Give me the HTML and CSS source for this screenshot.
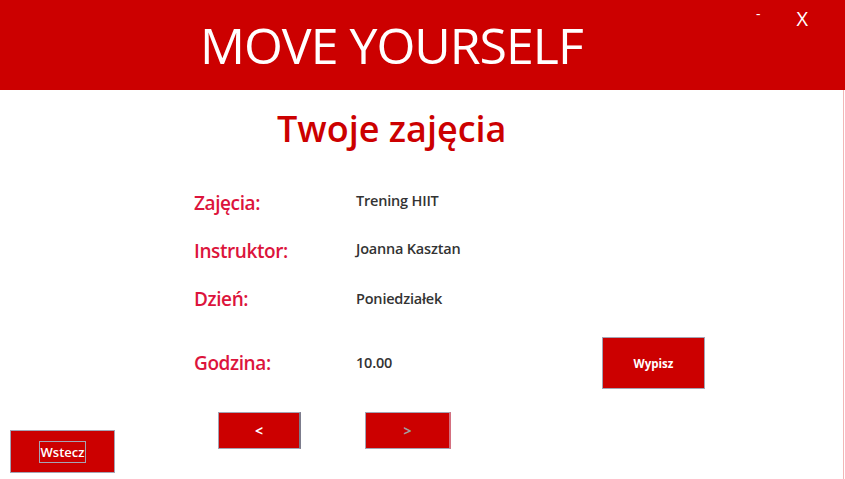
FILE: index.html
```html
<!DOCTYPE html>
<html lang="pl">
<head>
    <meta charset="UTF-8">
    <meta name="viewport" content="width=device-width, initial-scale=1.0">
    <title>Move Yourself - Twoje zajęcia</title>
    <link rel="stylesheet" href="styles.css">
</head>
<body>
    <div class="window">
        <header class="topbar">
            <h1 class="brand">MOVE YOURSELF</h1>
            <div class="window-controls">
                <span class="ctrl ctrl-min">-</span>
                <span class="ctrl ctrl-close">X</span>
            </div>
        </header>

        <main class="content">
            <h2 class="page-title">Twoje zajęcia</h2>

            <div class="details">
                <div class="row">
                    <span class="label">Zajęcia:</span>
                    <span class="value">Trening HIIT</span>
                </div>
                <div class="row">
                    <span class="label">Instruktor:</span>
                    <span class="value">Joanna Kasztan</span>
                </div>
                <div class="row row-day">
                    <span class="label">Dzień:</span>
                    <span class="value">Poniedziałek</span>
                </div>
                <div class="row row-last">
                    <span class="label">Godzina:</span>
                    <span class="value">10.00</span>
                    <button class="btn btn-signout">Wypisz</button>
                </div>
            </div>

            <div class="footer">
                <button class="btn btn-back"><span class="focus">Wstecz</span></button>
                <div class="pager">
                    <button class="btn btn-nav btn-prev">&lt;</button>
                    <button class="btn btn-nav btn-next" disabled>&gt;</button>
                </div>
            </div>
        </main>
    </div>
</body>
</html>
```

FILE: styles.css
```css
body {
    margin: 0;
    font-family: "Open Sans", "Noto Sans", sans-serif;
    background-color: white;
}
.window {
    width: 845px;
    height: 479px;
    overflow: hidden;
}
.topbar {
    display: flex;
    height: 90px;
    background-color: #cc0000;
    color: white;
}
.brand {
    margin: 0;
    padding: 11px 0 0 200px;
    font-size: 50px;
    font-weight: 400;
    line-height: 68px;
    letter-spacing: -1px;
}
.window-controls {
    display: flex;
    gap: 36px;
    margin-left: auto;
    margin-right: 37px;
    padding-top: 5px;
    font-size: 20px;
    line-height: 28px;
}
.ctrl-min {
    font-size: 14px;
    line-height: 18px;
}
.content {
    height: 389px;
    border-right: 1px solid #f2b6b6;
    margin-right: 1px;
}
.page-title {
    margin: 0;
    padding: 14px 0 0 277px;
    height: 72px;
    box-sizing: border-box;
    font-size: 36px;
    font-weight: 600;
    line-height: 50px;
    letter-spacing: 0;
    color: #cc0000;
}
.details {
    padding-left: 194px;
    padding-top: 18px;
}
.row {
    display: flex;
    height: 48px;
}
.label {
    width: 162px;
    padding-top: 9px;
    font-size: 19px;
    font-weight: 600;
    line-height: 28px;
    letter-spacing: -0.4px;
    color: #dc143c;
}
.value {
    width: 246px;
    padding-top: 11px;
    font-size: 14.5px;
    font-weight: 600;
    line-height: 20px;
    letter-spacing: -0.2px;
    color: #333;
}
.row-day .value {
    padding-top: 13px;
}
.row-last {
    height: 65px;
    padding-top: 13px;
    box-sizing: border-box;
    align-items: center;
}
.row-last .label,
.row-last .value {
    padding-top: 0;
}
.btn {
    background-color: #cc0000;
    color: white;
    border: 1px solid #a4a4b4;
    font-family: inherit;
    font-weight: 700;
    cursor: pointer;
    padding: 0;
}
.btn-signout {
    width: 103px;
    height: 52px;
    font-size: 11.5px;
}
.footer {
    display: flex;
    align-items: flex-start;
    margin-top: 23px;
    padding-left: 10px;
}
.btn-back {
    width: 105px;
    height: 43px;
    margin-top: 18px;
    font-size: 13px;
    font-weight: 600;
}
.focus {
    border: 1px solid #a4a4b4;
    padding: 1px 1px;
}
.pager {
    display: flex;
    gap: 64px;
    margin-left: 103px;
}
.btn-nav {
    height: 37px;
    font-size: 14px;
}
.btn-prev {
    width: 83px;
    border-right: 2px solid #7c7c8c;
}
.btn-next {
    width: 86px;
    color: #a0a0a0;
    border-right: 2px solid #d47080;
}
```
